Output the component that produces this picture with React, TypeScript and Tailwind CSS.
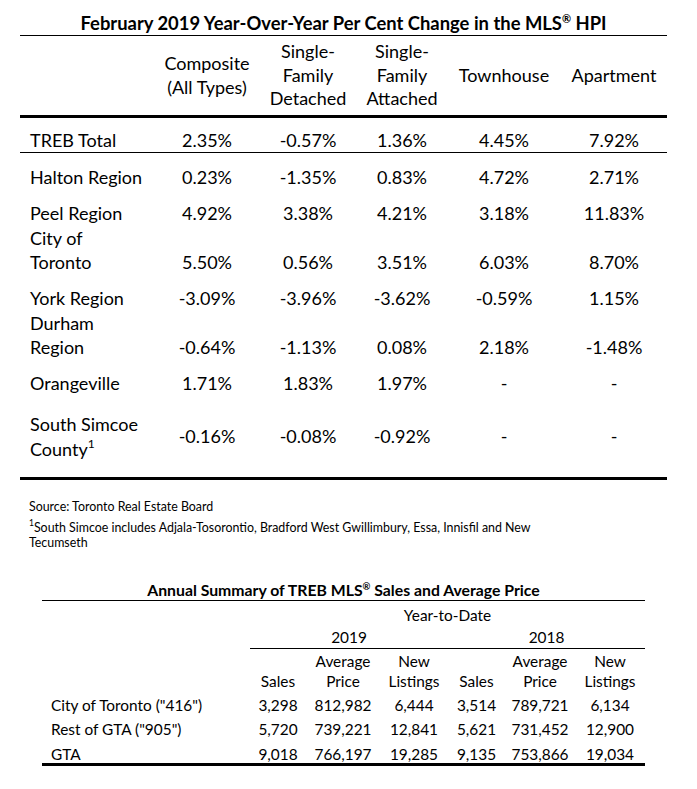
import React from "react";

const cols1 = "grid grid-cols-[137px_100px_102px_86px_118px_102px]";
const cols2 = "grid grid-cols-[208px_56px_74px_68px_57px_70px_70px]";

function Row1({
  label,
  vals,
  align,
  extra,
}: {
  label: React.ReactNode;
  vals: string[];
  align: string;
  extra: string;
}) {
  return (
    <div className={`${cols1} leading-[24.5px] ${align} ${extra}`}>
      <div className="pl-[10px]">{label}</div>
      {vals.map((v, i) => (
        <div key={i} className="text-center">
          {v}
        </div>
      ))}
    </div>
  );
}

function Row2({ label, vals, extra }: { label: string; vals: string[]; extra: string }) {
  return (
    <div className={`${cols2} leading-[24.5px] ${extra}`}>
      <div className="pl-[9px]">{label}</div>
      {vals.map((v, i) => (
        <div key={i} className="text-center">
          {v}
        </div>
      ))}
    </div>
  );
}

export default function App() {
  return (
    <div className="w-[697px] h-[789px] bg-white text-black font-['Lato',sans-serif] overflow-hidden">
      {/* Table 1 */}
      <div className="ml-[20px] w-[647px] pt-[12px] text-[18px]">
        <div className="text-center font-bold text-[18.4px] leading-[23px] border-b border-black">
          February 2019 Year-Over-Year Per Cent Change in the MLS
          <sup className="text-[11px] top-[-0.6em]">®</sup> HPI
        </div>
        <div className={`${cols1} h-[79px] items-center text-center leading-[23.5px]`}>
          <div></div>
          <div>
            Composite
            <br />
            (All Types)
          </div>
          <div>
            Single-
            <br />
            Family
            <br />
            Detached
          </div>
          <div>
            Single-
            <br />
            Family
            <br />
            Attached
          </div>
          <div>Townhouse</div>
          <div>Apartment</div>
        </div>
        <div className="h-[3px] bg-black"></div>
        <Row1
          label="TREB Total"
          vals={["2.35%", "-0.57%", "1.36%", "4.45%", "7.92%"]}
          align="items-start"
          extra="h-[35px] pt-[10px] border-b border-black"
        />
        <Row1
          label="Halton Region"
          vals={["0.23%", "-1.35%", "0.83%", "4.72%", "2.71%"]}
          align="items-start"
          extra="mt-[12px]"
        />
        <Row1
          label="Peel Region"
          vals={["4.92%", "3.38%", "4.21%", "3.18%", "11.83%"]}
          align="items-start"
          extra="mt-[11.5px]"
        />
        <Row1
          label={
            <>
              City of
              <br />
              Toronto
            </>
          }
          vals={["5.50%", "0.56%", "3.51%", "6.03%", "8.70%"]}
          align="items-end"
          extra=""
        />
        <Row1
          label="York Region"
          vals={["-3.09%", "-3.96%", "-3.62%", "-0.59%", "1.15%"]}
          align="items-start"
          extra="mt-[11.5px]"
        />
        <Row1
          label={
            <>
              Durham
              <br />
              Region
            </>
          }
          vals={["-0.64%", "-1.13%", "0.08%", "2.18%", "-1.48%"]}
          align="items-end"
          extra=""
        />
        <Row1
          label="Orangeville"
          vals={["1.71%", "1.83%", "1.97%", "-", "-"]}
          align="items-start"
          extra="mt-[11.5px]"
        />
        <Row1
          label={
            <>
              South Simcoe
              <br />
              County<sup className="text-[12px] top-[-0.6em]">1</sup>
            </>
          }
          vals={["-0.16%", "-0.08%", "-0.92%", "-", "-"]}
          align="items-center"
          extra="mt-[16.5px]"
        />
        <div className="mt-[16px] h-[3px] bg-black"></div>
      </div>

      {/* Footnotes */}
      <div className="ml-[29px] text-[12.4px]">
        <div className="mt-[17px] leading-[20px]">Source: Toronto Real Estate Board</div>
        <div className="mt-[2.5px] leading-[15px]">
          <sup className="text-[8.5px] top-[-0.6em]">1</sup>South Simcoe includes Adjala-Tosorontio,
          Bradford West Gwillimbury, Essa, Innisfil and New
          <br />
          Tecumseth
        </div>
      </div>

      {/* Table 2 */}
      <div className="ml-[42px] w-[603px] mt-[30px] text-[15.4px]">
        <div className="text-center font-bold text-[15.8px] leading-[20px] border-b border-black">
          Annual Summary of TREB MLS
          <sup className="text-[9.5px] top-[-0.6em]">®</sup> Sales and Average Price
        </div>
        <div className={`${cols2} text-center`}>
          <div></div>
          <div className="col-span-6 mt-[2.5px] leading-[24px]">Year-to-Date</div>
          <div></div>
          <div className="col-span-3 leading-[21px] border-b border-black">2019</div>
          <div className="col-span-3 leading-[21px] border-b border-black">2018</div>
        </div>
        <div className={`${cols2} text-center leading-[20px] items-end mt-[1.5px]`}>
          <div></div>
          <div>Sales</div>
          <div>
            Average
            <br />
            Price
          </div>
          <div>
            New
            <br />
            Listings
          </div>
          <div>Sales</div>
          <div>
            Average
            <br />
            Price
          </div>
          <div>
            New
            <br />
            Listings
          </div>
        </div>
        <Row2
          label={'City of Toronto ("416")'}
          vals={["3,298", "812,982", "6,444", "3,514", "789,721", "6,134"]}
          extra="mt-[2px]"
        />
        <Row2
          label={'Rest of GTA ("905")'}
          vals={["5,720", "739,221", "12,841", "5,621", "731,452", "12,900"]}
          extra=""
        />
        <Row2
          label="GTA"
          vals={["9,018", "766,197", "19,285", "9,135", "753,866", "19,034"]}
          extra="h-[21.5px]"
        />
        <div className="h-[3px] bg-black"></div>
      </div>
    </div>
  );
}
